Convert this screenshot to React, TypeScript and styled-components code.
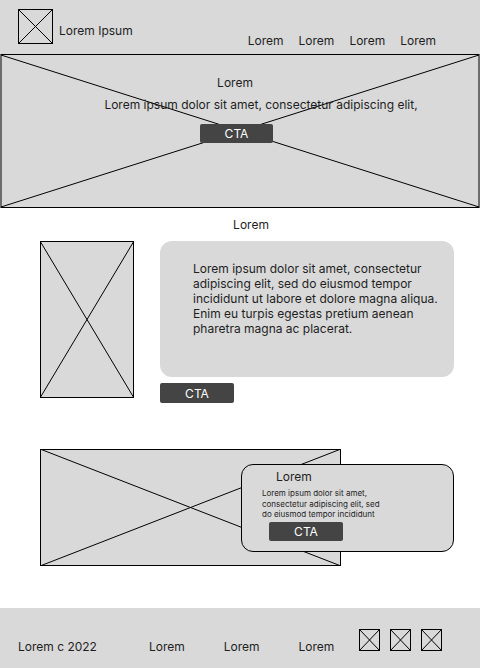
import styled, { createGlobalStyle } from "styled-components";

const GlobalStyle = createGlobalStyle`
  body {
    margin: 0;
    background: #ffffff;
    font-family: Inter, "Liberation Sans", sans-serif;
    color: #1e1e1e;
  }
`;

const Page = styled.div`
  width: 480px;
  display: flex;
  flex-direction: column;
`;

const Header = styled.header`
  height: 54px;
  background: #d9d9d9;
  display: flex;
  align-items: flex-start;
  padding: 9px 44px 0 18px;
  box-sizing: border-box;
`;

const Label = styled.span`
  font-size: 12px;
  line-height: 16px;
`;

const Brand = styled(Label)`
  margin: 14px 0 0 6px;
`;

const Nav = styled.nav`
  display: flex;
  gap: 15px;
  margin: 24px 0 0 auto;
`;

const Frame = styled.div<{ w: number; h: number; $clear?: boolean }>`
  width: ${(p) => p.w}px;
  height: ${(p) => p.h}px;
  flex-shrink: 0;
  background: ${(p) => (p.$clear ? "transparent" : "#d9d9d9")};
  svg {
    display: block;
    width: 100%;
    height: 100%;
  }
`;

const Placeholder = ({ w, h, clear }: { w: number; h: number; clear?: boolean }) => (
  <Frame w={w} h={h} $clear={clear}>
    <svg viewBox={`0 0 ${w} ${h}`} preserveAspectRatio="none">
      <rect x="0.5" y="0.5" width={w - 1} height={h - 1} fill="none" stroke="#000" />
      <line x1="0" y1="0" x2={w} y2={h} stroke="#000" />
      <line x1={w} y1="0" x2="0" y2={h} stroke="#000" />
    </svg>
  </Frame>
);

const Hero = styled.section`
  position: relative;
  height: 154px;
  background: #d9d9d9;
`;

const HeroArt = styled.svg`
  position: absolute;
  inset: 0;
  width: 100%;
  height: 100%;
`;

const HeroContent = styled.div`
  position: relative;
  display: flex;
  flex-direction: column;
  align-items: center;
  padding-top: 21px;
`;

const HeroTitle = styled(Label)`
  margin-right: 10px;
`;

const HeroText = styled(Label)`
  margin: 6px 0 0 42px;
`;

const Button = styled.button<{ w?: number; h?: number }>`
  width: ${(p) => p.w ?? 74}px;
  height: ${(p) => p.h ?? 20}px;
  background: #444444;
  color: #ffffff;
  border: none;
  border-radius: 2px;
  font-family: Inter, "Liberation Sans", sans-serif;
  font-size: 12px;
  padding: 0;
`;

const HeroButton = styled(Button)`
  margin: 11px 7px 0 0;
`;

const SectionLabel = styled.div`
  font-size: 12px;
  line-height: 16px;
  text-align: center;
  margin: 9px 0 0 22px;
`;

const Feature = styled.section`
  display: flex;
  gap: 26px;
  padding-left: 40px;
  margin-top: 8px;
`;

const FeatureBody = styled.div`
  display: flex;
  flex-direction: column;
  gap: 6px;
`;

const Card = styled.div`
  width: 294px;
  height: 136px;
  box-sizing: border-box;
  background: #d9d9d9;
  border-radius: 12px;
  padding: 20px 10px 0 33px;
  font-size: 12px;
  line-height: 15px;
`;

const Promo = styled.section`
  display: grid;
  grid-template-columns: 201px 100px 113px;
  margin: 46px 0 0 40px;
`;

const PromoImage = styled.div`
  grid-row: 1;
  grid-column: 1 / 3;
`;

const PromoCard = styled.div`
  grid-row: 1;
  grid-column: 2 / 4;
  align-self: start;
  margin-top: 15px;
  height: 88px;
  box-sizing: border-box;
  background: #d9d9d9;
  border: 1px solid #000;
  border-radius: 12px;
  display: flex;
  flex-direction: column;
  align-items: flex-start;
  padding: 4px 0 0 20px;
`;

const PromoTitle = styled(Label)`
  margin-left: 14px;
`;

const PromoText = styled.div`
  width: 125px;
  font-size: 8px;
  line-height: 10.5px;
  margin-top: 3px;
`;

const PromoButton = styled(Button)`
  margin: 2px 0 0 7px;
`;

const Footer = styled.footer`
  margin-top: 42px;
  height: 60px;
  background: #d9d9d9;
  display: flex;
  align-items: flex-start;
  padding: 21px 0 0 18px;
  box-sizing: border-box;
`;

const FooterText = styled(Label)`
  margin-top: 10px;
`;

const FooterLinks = styled.div`
  display: flex;
  gap: 39px;
  margin-left: 52px;
`;

const Socials = styled.div`
  display: flex;
  gap: 10px;
  margin-left: 25px;
`;

export default function App() {
  return (
    <Page>
      <GlobalStyle />
      <Header>
        <Placeholder w={35} h={35} clear />
        <Brand>Lorem Ipsum</Brand>
        <Nav>
          <Label>Lorem</Label>
          <Label>Lorem</Label>
          <Label>Lorem</Label>
          <Label>Lorem</Label>
        </Nav>
      </Header>
      <Hero>
        <HeroArt viewBox="0 0 480 154" preserveAspectRatio="none">
          <rect x="1" y="0.5" width="478" height="153" fill="none" stroke="#000" />
          <line x1="1" y1="1" x2="479" y2="153" stroke="#000" />
          <line x1="479" y1="1" x2="1" y2="153" stroke="#000" />
        </HeroArt>
        <HeroContent>
          <HeroTitle>Lorem</HeroTitle>
          <HeroText>Lorem ipsum dolor sit amet, consectetur adipiscing elit,</HeroText>
          <HeroButton w={73} h={19}>CTA</HeroButton>
        </HeroContent>
      </Hero>
      <SectionLabel>Lorem</SectionLabel>
      <Feature>
        <Placeholder w={94} h={157} />
        <FeatureBody>
          <Card>
            Lorem ipsum dolor sit amet, consectetur adipiscing elit, sed do eiusmod tempor
            incididunt ut labore et dolore magna aliqua. Enim eu turpis egestas pretium aenean
            pharetra magna ac placerat.
          </Card>
          <Button>CTA</Button>
        </FeatureBody>
      </Feature>
      <Promo>
        <PromoImage>
          <Placeholder w={301} h={117} />
        </PromoImage>
        <PromoCard>
          <PromoTitle>Lorem</PromoTitle>
          <PromoText>
            Lorem ipsum dolor sit amet, consectetur adipiscing elit, sed do eiusmod tempor
            incididunt
          </PromoText>
          <PromoButton h={19}>CTA</PromoButton>
        </PromoCard>
      </Promo>
      <Footer>
        <FooterText>Lorem c 2022</FooterText>
        <FooterLinks>
          <FooterText>Lorem</FooterText>
          <FooterText>Lorem</FooterText>
          <FooterText>Lorem</FooterText>
        </FooterLinks>
        <Socials>
          <Placeholder w={21} h={22} clear />
          <Placeholder w={21} h={22} clear />
          <Placeholder w={21} h={22} clear />
        </Socials>
      </Footer>
    </Page>
  );
}
